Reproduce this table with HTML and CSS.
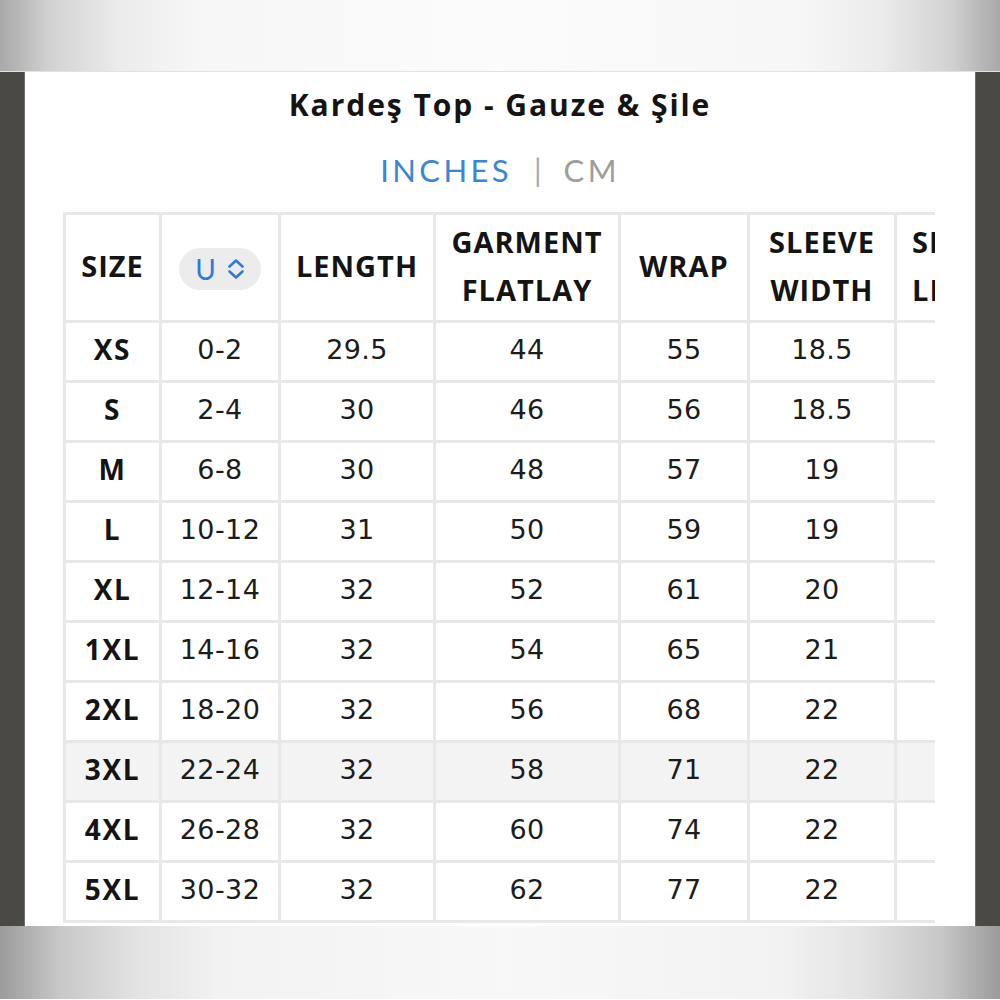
FILE: index.html
```html
<!DOCTYPE html>
<html lang="tr">
<head>
<meta charset="utf-8">
<title>Kardeş Top - Gauze &amp; Şile</title>
<link rel="stylesheet" href="styles.css">
</head>
<body>
<div class="band band-top"></div>
<div class="middle">
  <div class="side side-left"></div>
  <main class="card">
    <h1 class="title">Kardeş Top - Gauze &amp; Şile</h1>
    <div class="units">
      <span class="unit active">INCHES</span>
      <span class="sep">|</span>
      <span class="unit">CM</span>
    </div>
    <div class="table-wrap">
      <table class="chart">
        <colgroup>
          <col class="c1"><col class="c2"><col class="c3"><col class="c4"><col class="c5"><col class="c6"><col class="c7">
        </colgroup>
        <thead>
          <tr>
            <th>SIZE</th>
            <th>
              <span class="pill">
                <span class="pill-u">U</span>
                <svg class="pill-chev" width="18" height="22" viewBox="0 0 18 22" aria-hidden="true">
                  <path d="M2.5 8.5 L9 2.5 L15.5 8.5" fill="none" stroke="#2f7ad6" stroke-width="2.6" stroke-linecap="round" stroke-linejoin="round"/>
                  <path d="M2.5 13.5 L9 19.5 L15.5 13.5" fill="none" stroke="#2f7ad6" stroke-width="2.6" stroke-linecap="round" stroke-linejoin="round"/>
                </svg>
              </span>
            </th>
            <th>LENGTH</th>
            <th>GARMENT<br>FLATLAY</th>
            <th>WRAP</th>
            <th>SLEEVE<br>WIDTH</th>
            <th class="cut">SLEEVE<br>LENGTH</th>
          </tr>
        </thead>
        <tbody>
          <tr><th>XS</th><td>0-2</td><td>29.5</td><td>44</td><td>55</td><td>18.5</td><td></td></tr>
          <tr><th>S</th><td>2-4</td><td>30</td><td>46</td><td>56</td><td>18.5</td><td></td></tr>
          <tr><th>M</th><td>6-8</td><td>30</td><td>48</td><td>57</td><td>19</td><td></td></tr>
          <tr><th>L</th><td>10-12</td><td>31</td><td>50</td><td>59</td><td>19</td><td></td></tr>
          <tr><th>XL</th><td>12-14</td><td>32</td><td>52</td><td>61</td><td>20</td><td></td></tr>
          <tr><th>1XL</th><td>14-16</td><td>32</td><td>54</td><td>65</td><td>21</td><td></td></tr>
          <tr><th>2XL</th><td>18-20</td><td>32</td><td>56</td><td>68</td><td>22</td><td></td></tr>
          <tr class="hl"><th>3XL</th><td>22-24</td><td>32</td><td>58</td><td>71</td><td>22</td><td></td></tr>
          <tr><th>4XL</th><td>26-28</td><td>32</td><td>60</td><td>74</td><td>22</td><td></td></tr>
          <tr><th>5XL</th><td>30-32</td><td>32</td><td>62</td><td>77</td><td>22</td><td></td></tr>
        </tbody>
      </table>
    </div>
  </main>
  <div class="side side-right"></div>
</div>
<div class="band band-bottom"></div>
</body>
</html>
```

FILE: styles.css
```css
* { box-sizing: border-box; }
html, body { margin: 0; padding: 0; }
body {
  width: 1000px;
  height: 1000px;
  overflow: hidden;
  background: #fff;
  font-family: "Open Sans", "Lato", sans-serif;
  color: #141414;
}

.band {
  width: 1000px;
  background: linear-gradient(to right, #a9a8a9 0, #d2d2d2 50px, #ececec 120px, #f7f7f7 200px, #fbfbfb 500px, #f7f7f7 800px, #ececec 880px, #d2d2d2 950px, #a9a8a9 1000px);
}
.band-top {
  height: 72px;
  border-bottom: 1px solid #e2e2e2;
}
.band-bottom {
  height: 73px;
  background: linear-gradient(to right, #9c9b9c 0, #c8c8c8 60px, #e4e4e4 140px, #f2f2f2 220px, #f8f8f8 500px, #f2f2f2 780px, #e4e4e4 860px, #c8c8c8 940px, #9c9b9c 1000px);
}

.middle {
  display: flex;
  height: 854px;
}
.side {
  width: 25px;
  background: #4a4946;
}
.side-left { border-right: 1px solid #6e6d6a; }
.side-right { border-left: 1px solid #6e6d6a; }

.card {
  flex: 1;
  background: #fff;
  padding-top: 12px;
  display: flex;
  flex-direction: column;
  align-items: stretch;
}

.title {
  margin: 0;
  height: 42px;
  line-height: 42px;
  text-align: center;
  font-family: "Open Sans", sans-serif;
  font-weight: 700;
  font-size: 30px;
  letter-spacing: 1.95px;
  color: #141414;
}

.units {
  margin-top: 24px;
  height: 40px;
  line-height: 40px;
  display: flex;
  justify-content: center;
  gap: 22px;
  font-family: "Lato", sans-serif;
  font-size: 31px;
  letter-spacing: 3.4px;
}
.unit { color: #9d9d9d; }
.unit.active { color: #3a86d4; }
.sep { color: #a8a8a8; font-size: 30px; letter-spacing: 0; }

.table-wrap {
  margin-top: 22px;
  margin-left: 38px;
  width: 872px;
  overflow: hidden;
}

.chart {
  border-collapse: collapse;
  table-layout: fixed;
  width: 990px;
}
.c1 { width: 96px; }
.c2 { width: 119px; }
.c3 { width: 155px; }
.c4 { width: 185px; }
.c5 { width: 129px; }
.c6 { width: 147px; }
.c7 { width: 159px; }

.chart th, .chart td {
  border: 3px solid #e8e8ea;
  text-align: center;
  vertical-align: middle;
  padding: 0;
  white-space: nowrap;
}
.chart thead th {
  height: 108px;
  padding-bottom: 4px;
  font-family: "Open Sans", sans-serif;
  font-weight: 700;
  font-size: 29px;
  letter-spacing: 1px;
  line-height: 48px;
  color: #141414;
}
.chart thead th.cut { text-align: left; padding-left: 15px; }

.chart tbody th {
  height: 60px;
  padding-bottom: 5px;
  font-family: "Open Sans", sans-serif;
  font-weight: 700;
  font-size: 28px;
  letter-spacing: 1.6px;
  color: #141414;
}
.chart tbody td {
  height: 60px;
  padding-bottom: 5px;
  font-family: "DejaVu Sans", "Open Sans", sans-serif;
  font-weight: 400;
  font-size: 27px;
  letter-spacing: 0.4px;
  color: #1c1c1c;
}
.chart tbody tr.hl th, .chart tbody tr.hl td { background: #f3f3f4; }

.pill {
  display: inline-flex;
  align-items: center;
  justify-content: center;
  gap: 10px;
  width: 82px;
  height: 42px;
  border-radius: 21px;
  background: #ececec;
  vertical-align: middle;
}
.pill-u {
  font-family: "Lato", sans-serif;
  font-weight: 400;
  font-size: 28px;
  line-height: 1;
  color: #2f7ad6;
}
.pill-chev { display: block; }
```
